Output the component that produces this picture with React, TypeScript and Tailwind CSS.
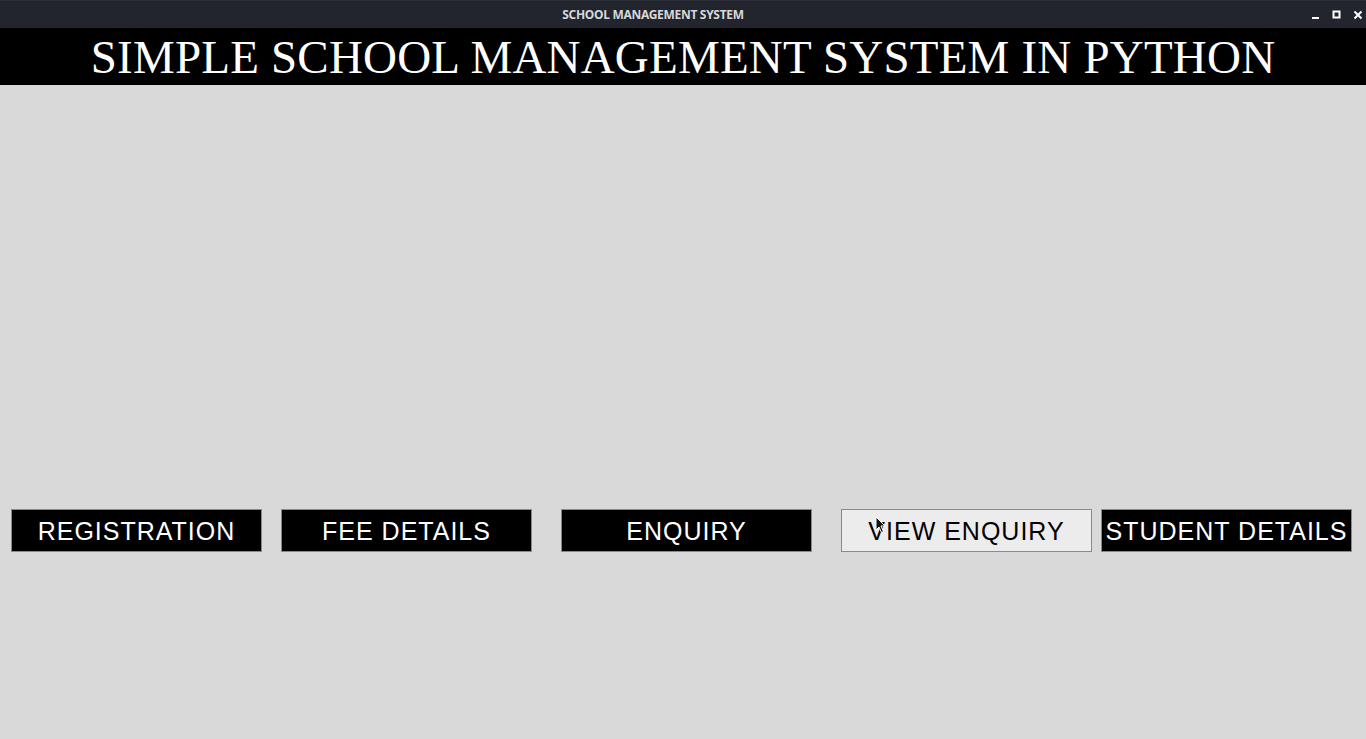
export default function App() {
  const buttons = [
    { label: "REGISTRATION", ml: "ml-[11px]", dark: true },
    { label: "FEE DETAILS", ml: "ml-[19px]", dark: true },
    { label: "ENQUIRY", ml: "ml-[29px]", dark: true },
    { label: "VIEW ENQUIRY", ml: "ml-[29px]", dark: false },
    { label: "STUDENT DETAILS", ml: "ml-[9px]", dark: true },
  ];

  return (
    <div className="h-[739px] w-[1366px] overflow-hidden bg-[#d9d9d9] flex flex-col">
      {/* window title bar */}
      <div className="relative h-[28px] bg-[#22252d] border-t border-[#2c2f37] flex items-center justify-center">
        <span className="mr-[60px] text-[12px] font-bold text-[#d6d8dc] tracking-[-0.3px]" style={{ fontFamily: '"Noto Sans", sans-serif' }}>
          SCHOOL MANAGEMENT SYSTEM
        </span>
        <div className="absolute right-0 top-0 h-full flex items-center gap-[11px] pr-[3px]">
          <svg width="10" height="10" viewBox="0 0 10 10"><rect x="1" y="7" width="7" height="2" fill="#fff" /></svg>
          <svg width="10" height="10" viewBox="0 0 10 10"><rect x="1.5" y="1.5" width="6" height="6" fill="none" stroke="#fff" strokeWidth="2" /></svg>
          <svg width="10" height="10" viewBox="0 0 10 10"><path d="M1.5 1.5 L8.5 8.5 M8.5 1.5 L1.5 8.5" stroke="#fff" strokeWidth="2" /></svg>
        </div>
      </div>

      {/* heading */}
      <div className="h-[57px] bg-black flex items-center justify-center">
        <h1 className="text-white text-[47px] leading-none tracking-[0.2px] whitespace-nowrap pt-[2px]" style={{ fontFamily: '"Liberation Serif", "Times New Roman", serif' }}>
          SIMPLE SCHOOL MANAGEMENT SYSTEM IN PYTHON
        </h1>
      </div>

      {/* menu buttons */}
      <div className="relative mt-[424px] flex">
        {buttons.map((b) => (
          <button
            key={b.label}
            className={`${b.ml} h-[43px] w-[251px] pt-[2px] border border-[#8a8a8a] flex items-center justify-center text-[25px] tracking-[1px] whitespace-nowrap ${
              b.dark ? "bg-black text-white" : "bg-[#ececec] text-black"
            }`}
            style={{ fontFamily: '"Liberation Sans", Arial, sans-serif' }}
          >
            {b.label}
          </button>
        ))}
        {/* mouse cursor */}
        <svg className="absolute left-[875px] top-[7px]" width="12" height="18" viewBox="0 0 12 18">
          <path d="M1 1 L1 14 L4 11 L6.5 16.5 L8.5 15.5 L6 10 L10 10 Z" fill="#111" stroke="#fff" strokeWidth="1" />
        </svg>
      </div>
    </div>
  );
}
